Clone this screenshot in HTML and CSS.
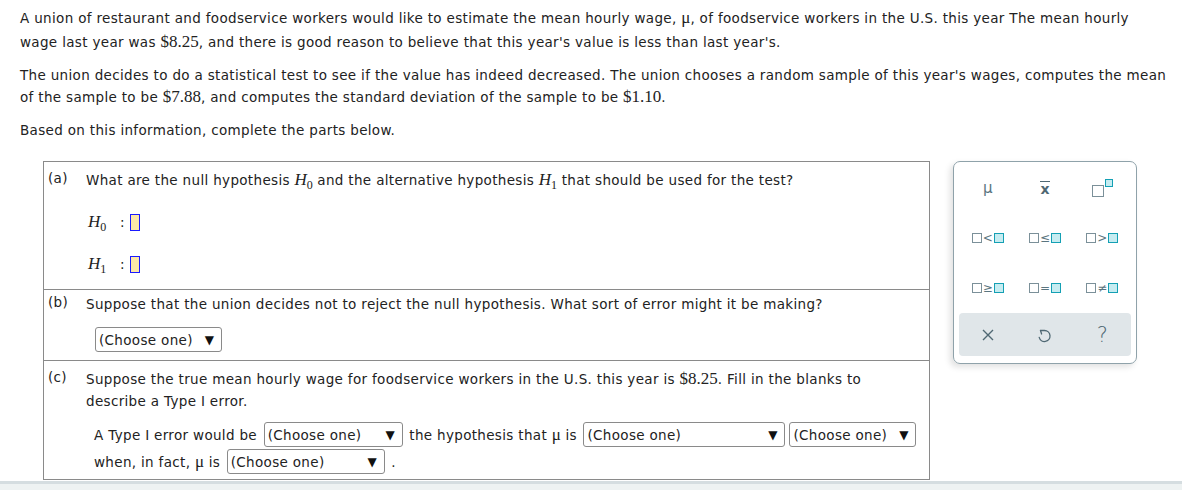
FILE: index.html
```html
<!DOCTYPE html>
<html>
<head>
<meta charset="utf-8">
<link rel="stylesheet" href="styles.css">
</head>
<body>
<div class="page">
  <p class="intro p1">A union of restaurant and foodservice workers would like to estimate the mean hourly wage, <span class="m">μ</span>, of foodservice workers in the U.S. this year The mean hourly wage last year was <span class="m">$8.25</span>, and there is good reason to believe that this year's value is less than last year's.</p>
  <p class="intro p2">The union decides to do a statistical test to see if the value has indeed decreased. The union chooses a random sample of this year's wages, computes the mean of the sample to be <span class="m">$7.88</span>, and computes the standard deviation of the sample to be <span class="m">$1.10</span>.</p>
  <p class="intro p3">Based on this information, complete the parts below.</p>

  <div class="work">
    <div class="box">
      <section class="part part-a">
        <div class="qline"><span class="lbl">(a)</span><span class="qtext">What are the null hypothesis <span class="m"><i>H</i><sub>0</sub></span> and the alternative hypothesis <span class="m"><i>H</i><sub>1</sub></span> that should be used for the test?</span></div>
        <div class="hyp"><span class="m hm"><i>H</i><sub>0</sub></span><span class="colon">:</span><span class="slot"></span></div>
        <div class="hyp"><span class="m hm"><i>H</i><sub>1</sub></span><span class="colon">:</span><span class="slot"></span></div>
      </section>
      <section class="part part-b">
        <div class="qline"><span class="lbl">(b)</span><span class="qtext">Suppose that the union decides not to reject the null hypothesis. What sort of error might it be making?</span></div>
        <div class="ans-b"><span class="sel w127">(Choose one)<span class="arr">▼</span></span></div>
      </section>
      <section class="part part-c">
        <div class="qline"><span class="lbl">(c)</span><span class="qtext">Suppose the true mean hourly wage for foodservice workers in the U.S. this year is <span class="m">$8.25</span>. Fill in the blanks to describe a Type I error.</span></div>
        <div class="blanks">
          <div class="frow">A Type I error would be <span class="sel w139">(Choose one)<span class="arr">▼</span></span> the hypothesis that <span class="m">μ</span> is <span class="sel w202">(Choose one)<span class="arr">▼</span></span> <span class="sel w127">(Choose one)<span class="arr">▼</span></span></div>
          <div class="frow">when, in fact, <span class="m">μ</span> is <span class="sel w158">(Choose one)<span class="arr">▼</span></span> .</div>
        </div>
      </section>
    </div>

    <div class="pad">
      <div class="keys">
        <div class="key"><span class="mu">μ</span></div>
        <div class="key"><span class="xbar">x</span></div>
        <div class="key"><span class="pow"><span class="sq big"></span><span class="sq on small"></span></span></div>
        <div class="key"><span class="sq"></span><span class="op">&lt;</span><span class="sq on"></span></div>
        <div class="key"><span class="sq"></span><span class="op">≤</span><span class="sq on"></span></div>
        <div class="key"><span class="sq"></span><span class="op">&gt;</span><span class="sq on"></span></div>
        <div class="key"><span class="sq"></span><span class="op">≥</span><span class="sq on"></span></div>
        <div class="key"><span class="sq"></span><span class="op">=</span><span class="sq on"></span></div>
        <div class="key"><span class="sq"></span><span class="op">≠</span><span class="sq on"></span></div>
      </div>
      <div class="tools">
        <div class="tool">
          <svg width="14" height="14" viewBox="0 0 14 14"><path d="M2 2 L12 12 M12 2 L2 12" stroke="#4f6873" stroke-width="1.4" fill="none"/></svg>
        </div>
        <div class="tool">
          <svg width="15" height="18" viewBox="0 0 15 18"><path d="M3.5 4.5 L7.5 4.5 A5.5 5.5 0 1 1 2.2 11.4" stroke="#4f6873" stroke-width="1.3" fill="none" stroke-linecap="round"/><path d="M3.5 4.5 L4.6 8" stroke="#4f6873" stroke-width="1.3" fill="none" stroke-linecap="round"/></svg>
        </div>
        <div class="tool q">?</div>
      </div>
    </div>
  </div>
</div>
<div class="footer"></div>
</body>
</html>
```

FILE: styles.css
```css
html, body {
  margin: 0;
  padding: 0;
  background: #fff;
}
body {
  font-family: "DejaVu Sans", Verdana, sans-serif;
  font-size: 13.5px;
  letter-spacing: 0.33px;
  color: #222;
  width: 1182px;
  height: 490px;
  overflow: hidden;
}
.page {
  padding: 6px 0 0 20px;
}
.intro {
  margin: 0;
  width: 1148px;
}
.p1 { line-height: 24px; margin-bottom: 10px; }
.p2 { line-height: 22px; margin-bottom: 11px; }
.p3 { line-height: 22px; margin-bottom: 20px; }

.m {
  font-family: "Liberation Serif", "Times New Roman", serif;
  font-size: 17px;
  letter-spacing: 0;
}
.m i { font-style: italic; }
.m sub {
  font-size: 12px;
  vertical-align: -4px;
  line-height: 0;
}

.work {
  display: flex;
  align-items: flex-start;
  margin-left: 23px;
}
.box {
  width: 885px;
  border: 1px solid #8a8a8a;
}
.part {
  border-top: 1px solid #8a8a8a;
}
.part:first-child { border-top: none; }

.qline {
  display: flex;
  padding: 7px 40px 0 4px;
  line-height: 22px;
}
.lbl {
  width: 38px;
  flex: none;
  position: relative;
  top: -2px;
}
.part-a { height: 127px; }
.hyp {
  display: flex;
  align-items: center;
  height: 42px;
  padding-left: 44px;
}
.part-a .qline + .hyp { margin-top: 10px; }
.hm { width: 34px; display: inline-block; }
.colon { margin-left: -2px; margin-right: 5px; }
.slot {
  display: inline-block;
  width: 8px;
  height: 15px;
  border: 1px solid #1a1aff;
  background: #fde8a8;
}

.part-b { height: 70px; }
.part-b .qline { padding-top: 3px; }
.ans-b {
  padding: 12px 0 0 51px;
}
.sel {
  display: inline-flex;
  align-items: center;
  justify-content: space-between;
  box-sizing: border-box;
  height: 25px;
  border: 1px solid #8a8a8a;
  border-radius: 3px;
  padding: 0 7px 0 3px;
  vertical-align: middle;
  color: #222;
  background: #fff;
}
.arr { font-size: 12px; color: #111; letter-spacing: 0; }
.w127 { width: 127px; }
.w139 { width: 139px; }
.w202 { width: 202px; }
.w158 { width: 158px; }

.part-c { height: 118px; }
.part-c .qline { padding-top: 7px; }
.blanks {
  padding: 9px 0 0 50px;
}
.frow {
  height: 27px;
  display: flex;
  align-items: center;
  white-space: pre;
}
.frow .sel { margin: 0 2px; }

.pad {
  margin-left: 23px;
  height: 201px;
  border: 1px solid #8fa2aa;
  border-radius: 7px;
  box-shadow: -3px 3px 6px rgba(0,0,0,0.12);
  padding: 0 5px;
  width: 172px;
}
.keys {
  display: grid;
  grid-template-columns: repeat(3, 1fr);
  grid-auto-rows: 50px;
  padding-top: 1px;
}
.key {
  display: flex;
  align-items: center;
  justify-content: center;
  color: #5a7580;
  letter-spacing: 0;
}
.mu { font-size: 15px; color: #5a7580; }
.xbar {
  font-size: 14px;
  font-weight: bold;
  color: #4f6873;
  border-top: 1.5px solid #4f6873;
  line-height: 11px;
  padding-top: 2px;
}
.sq {
  display: inline-block;
  width: 8px;
  height: 8px;
  border: 1.5px solid #7b9099;
  background: #fff;
}
.sq.on {
  border-color: #14a0b4;
  background: #c6ecf1;
}
.op {
  font-size: 12px;
  margin: 0 1px;
  color: #5a7580;
  line-height: 10px;
}
.pow { position: relative; display: inline-block; width: 24px; height: 18px; }
.pow .big { width: 10px; height: 10px; position: absolute; left: 2px; top: 6px; }
.pow .small { width: 6px; height: 6px; position: absolute; left: 15px; top: 0; }
.tools {
  height: 43px;
  background: #e0e6e9;
  border-radius: 4px;
  display: grid;
  grid-template-columns: repeat(3, 1fr);
  align-items: center;
  justify-items: center;
}
.tool { display: flex; align-items: center; justify-content: center; color: #4f6873; }
.q { font-size: 21px; font-weight: 300; letter-spacing: 0; color: #4f6873; }

.footer {
  position: absolute;
  left: 0;
  top: 481px;
  width: 1182px;
  height: 9px;
  border-top: 3px solid #d5dde0;
  background: #eef2f2;
  box-sizing: border-box;
}
```
